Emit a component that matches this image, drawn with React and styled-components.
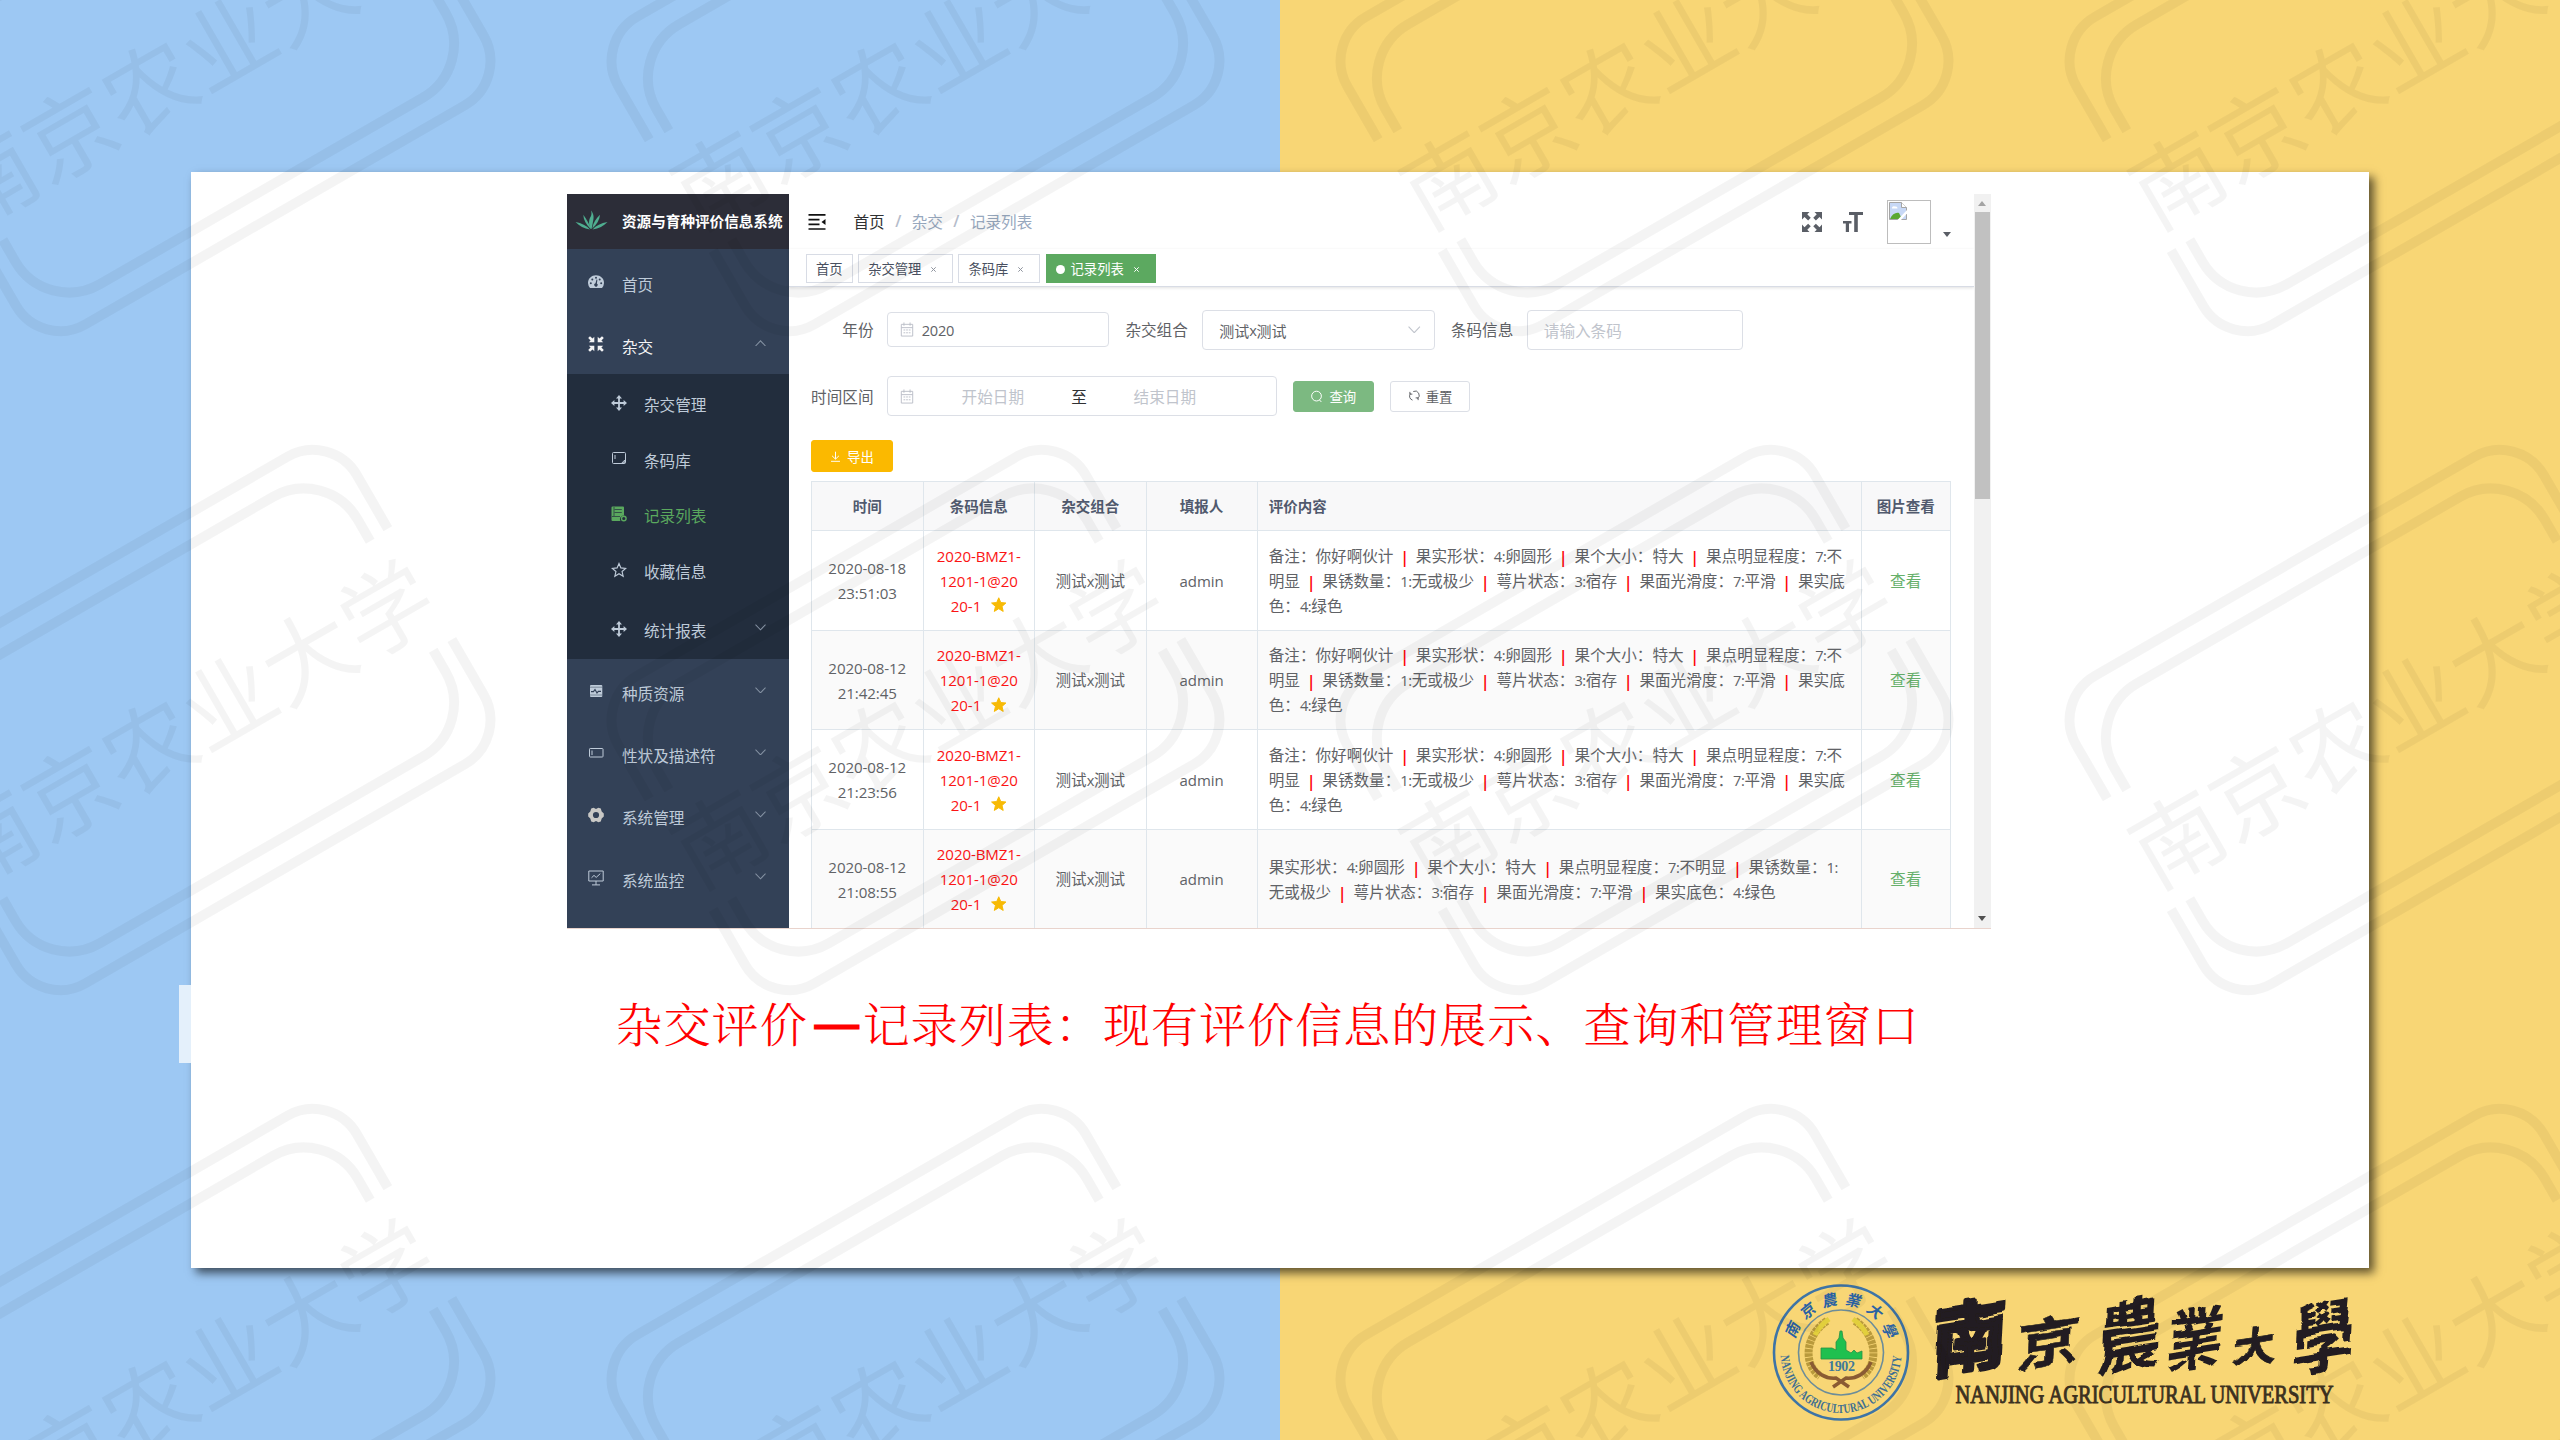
import React from 'react';
import styled, { createGlobalStyle, css } from 'styled-components';

const GlobalStyle = createGlobalStyle`
  *, *::before, *::after { box-sizing: border-box; }
  body {
    margin: 0;
    font-family: "Open Sans", "Noto Sans", "Noto Sans CJK SC", sans-serif;
    color: #606266;
  }
`;

/* ---------- slide ---------- */

const Slide = styled.div`
  position: relative;
  width: 2560px;
  height: 1440px;
  overflow: hidden;
  padding: 172px 191px 0;
  background: linear-gradient(90deg, #9dc8f3 0 50%, #f8d675 50% 100%);
`;

const Card = styled.section`
  position: relative;
  height: 1096px;
  padding: 22px 0 0 376px;
  background: #fff;
  box-shadow: 5px 5px 9px rgba(0, 0, 0, 0.62);
`;

const SideTab = styled.div`
  position: absolute;
  left: -12px;
  top: 813px;
  width: 12px;
  height: 78px;
  background: #e4f0fb;
`;

const Caption = styled.h1`
  display: flex;
  margin: 62px 0 0 48.5px;
  height: 70px;
  line-height: 70px;
  font-family: "Liberation Serif", "Noto Serif CJK SC", "Noto Sans CJK SC", serif;
  font-weight: 300;
  font-size: 47px;
  letter-spacing: 1.05px;
  color: #f00;
  white-space: nowrap;
`;

const Dash = styled.span`
  width: 55px;
  padding-left: 8px;
  font-size: 42px;
  line-height: 64px;
  letter-spacing: 0;
  -webkit-text-stroke: 3px #f00;
`;

/* ---------- application window ---------- */

const Window = styled.div`
  display: flex;
  width: 1424px;
  height: 735px;
  overflow: hidden;
  border-bottom: 1px solid #e9d3cc;
`;

const Sidebar = styled.nav`
  flex: none;
  width: 222px;
  background: #334157;
`;

const Brand = styled.div`
  display: flex;
  align-items: center;
  height: 55.4px;
  padding: 0 0 2px 8px;
  background: #2c2d38;
  color: #fff;
  font-weight: 700;
  font-size: 14.6px;
  white-space: nowrap;
  svg { margin-right: 14px; flex: none; }
`;

const Item = styled.div`
  position: relative;
  display: flex;
  align-items: center;
  height: ${p => (p.$tall ? 62.3 : 55.6)}px;
  padding: 0 23px 0 ${p => (p.$nested ? 44 : 21)}px;
  font-size: 15.6px;
  color: ${p => p.$color || '#bfcbd9'};
`;

const ItemIcon = styled.span`
  display: flex;
  width: 16px;
  height: 16px;
  margin: 2px ${p => (p.$nested ? 17 : 18)}px 0 0;
`;

const ItemText = styled.span`
  flex: 1;
  padding-top: ${p => (p.$nested ? 5.5 : 7)}px;
`;

const Submenu = styled.div`
  background: #222d3d;
`;

const Main = styled.main`
  flex: none;
  width: 1184.5px;
  background: #fff;
`;

const Navbar = styled.header`
  display: flex;
  align-items: center;
  height: 55px;
  padding: 0 23px 0 19px;
  box-shadow: 0 1px 4px rgba(0, 21, 41, 0.08);
`;

const Crumbs = styled.div`
  display: flex;
  flex: 1;
  padding: 0 0 0 27.5px;
  font-size: 15.6px;
  color: #97a8be;
`;

const Crumb = styled.span`
  color: ${p => (p.$link ? '#303133' : '#97a8be')};
`;

const Slash = styled.b`
  width: 27px;
  text-align: center;
  font-weight: 600;
  color: #b5bccb;
`;

const HeadTools = styled.div`
  display: flex;
  align-items: center;
  gap: 21px;
  color: #5a5e66;
`;

const Avatar = styled.div`
  width: 44px;
  height: 44px;
  margin: 0 1px 0 3px;
  padding: 1px;
  border: 1px solid #bdbdbd;
`;

const Caret = styled.i`
  width: 0;
  height: 0;
  margin: 26px 0 0 -10px;
  border: 4px solid transparent;
  border-top: 5px solid #5a5e66;
  border-bottom: 0;
`;

const Tags = styled.div`
  display: flex;
  gap: 5.7px;
  height: 38px;
  padding: 5px 0 0 17px;
  border-bottom: 1px solid #d8dce5;
  box-shadow: 0 1px 3px rgba(0, 0, 0, 0.12);
  background: #fff;
`;

const Tag = styled.span`
  display: flex;
  align-items: center;
  height: 29px;
  width: ${p => p.$w}px;
  padding: 0 0 0 9px;
  border: 1px solid ${p => (p.$active ? '#5ca960' : '#d8dce5')};
  background: ${p => (p.$active ? '#5ca960' : '#fff')};
  color: ${p => (p.$active ? '#fff' : '#495060')};
  font-size: 13.3px;
  white-space: nowrap;
  svg { margin: 2px 0 0 10px; }
`;

const Dot = styled.i`
  width: 9px;
  height: 9px;
  margin: 1px 6px 0 0;
  border-radius: 50%;
  background: #fff;
`;

const Content = styled.div`
  padding: 22.6px 22px 0 22px;
`;

const FormRow = styled.div`
  display: flex;
  align-items: center;
  height: 40px;
  margin-bottom: ${p => p.$gap}px;
`;

const Label = styled.label`
  width: ${p => p.$w}px;
  margin-right: ${p => p.$mr}px;
  text-align: right;
  font-size: 15.6px;
  white-space: nowrap;
`;

const Field = styled.div`
  display: flex;
  align-items: center;
  width: ${p => p.$w}px;
  height: ${p => p.$h || 40}px;
  margin-right: ${p => p.$mr || 0}px;
  padding: 1px 13px 0 ${p => p.$pl}px;
  border: 1px solid #dcdfe6;
  border-radius: 4px;
  background: #fff;
  font-size: 15px;
  color: #606266;
  svg { margin-top: -1px; }
`;

const FieldValue = styled.span`
  margin-left: 7.5px;
  font-size: 14.6px;
  letter-spacing: -0.3px;
`;

const Placeholder = styled.span`
  font-size: 15.6px;
  color: #c0c4cc;
  width: ${p => (p.$w ? `${p.$w}px` : 'auto')};
  text-align: ${p => (p.$w ? 'center' : 'left')};
`;

const RangeWord = styled.span`
  width: 16px;
  font-size: 15.6px;
  color: #303133;
`;

const Spacer = styled.span`
  flex: 1;
`;

const Button = styled.button`
  display: flex;
  align-items: center;
  justify-content: center;
  gap: 6px;
  width: ${p => p.$w}px;
  height: ${p => p.$h || 31}px;
  margin: 0 ${p => p.$mr || 0}px 0 0;
  padding: 0 0 1px;
  border: 1px solid ${p => p.$border};
  border-radius: 3px;
  background: ${p => p.$bg};
  color: ${p => p.$fg};
  font: 13.4px "Open Sans", "Noto Sans CJK SC", sans-serif;
  svg { margin-top: 1px; }
`;

/* ---------- table ---------- */

const columns = '111.5px 111.5px 111.5px 111.2px 604px 89px';

const Grid = styled.div`
  width: 1139.7px;
  margin: 9px 0 0;
  border: 1px solid #dfe6ec;
  border-right: 0;
  border-bottom: 0;
`;

const Row = styled.div`
  display: grid;
  grid-template-columns: ${columns};
  height: ${p => (p.$head ? 49 : 99.5)}px;
  background: ${p => (p.$head ? '#f8f8f9' : p.$striped ? '#fafafa' : '#fff')};
`;

const cellBox = css`
  display: flex;
  flex-direction: column;
  justify-content: center;
  align-items: ${p => (p.$left ? 'flex-start' : 'center')};
  padding-left: ${p => (p.$left ? 11 : 0)}px;
  border-right: 1px solid #dfe6ec;
  border-bottom: 1px solid #dfe6ec;
`;

const HeadCell = styled.div`
  ${cellBox}
  padding-bottom: 1px;
  font-weight: 700;
  font-size: 14.5px;
  color: #515a6e;
`;

const Cell = styled.div`
  ${cellBox}
  padding-top: 1.8px;
  font-size: 15px;
  line-height: 25.1px;
  color: ${p => p.$color || '#606266'};
  white-space: nowrap;
`;

const Line = styled.div`
  display: flex;
  align-items: center;
  height: 25.1px;
  font-size: ${p => (p.$cjk ? 15.6 : 15.1)}px;
  letter-spacing: ${p => (p.$cjk ? 0 : -0.1)}px;
  svg { margin: -3px 0 0 10px; }
`;

const Latin = styled.span`
  font-size: 14.6px;
  letter-spacing: -0.4px;
`;

const Bar = styled.span`
  width: 22.4px;
  text-align: center;
  font-size: 17px;
  font-weight: 600;
  color: #f00;
`;

/* ---------- scrollbar ---------- */

const Scroll = styled.div`
  display: flex;
  flex-direction: column;
  align-items: center;
  flex: 1;
  background: #f1f1f1;
`;

const ScrollArrow = styled.i`
  margin: ${p => (p.$down ? '417px 0 0' : '7px 0 6px')};
  border: 4px solid transparent;
  ${p => (p.$down
    ? 'border-top: 5px solid #505050; border-bottom: 0;'
    : 'border-bottom: 5px solid #a3a3a3; border-top: 0;')}
`;

const Thumb = styled.div`
  width: 15.5px;
  height: 287px;
  background: #c1c1c1;
`;

/* ---------- university mark ---------- */

const Mark = styled.div`
  display: flex;
  margin: 15px 0 0 1580px;
  svg { overflow: visible; }
`;

const Overlay = styled.svg`
  position: absolute;
  inset: 0;
  pointer-events: none;
`;

/* ---------- icons ---------- */

const Svg = ({ s = 16, w, h, box = '0 0 16 16', children, ...rest }) => (
  <svg width={w || s} height={h || s} viewBox={box} fill="none" stroke="currentColor" strokeWidth="1" preserveAspectRatio="none" {...rest}>
    {children}
  </svg>
);

const Leaf = () => (
  <svg width="33" height="21" viewBox="0 0 33 21" fill="#4fae90">
    <path d="M15.800 19C13 14 14 9 16 6C16.800 4 16.500 2 16 .5C19 4 19 8 18 11.500C17.500 14.500 17 17 16.500 19Z" />
    <path d="M15.200 18.500C11 14.500 8.500 10 8.300 4.800C11 8.500 13.800 13 15.800 18.500Z" />
    <path d="M17.300 18.500C18 13 21 8.500 25 4.800C24.500 10 22 14.500 17.300 18.500Z" />
    <path d="M15 19.500C9 18.500 4.500 16 .5 12C6.500 13 11.500 15.500 15 19.500Z" />
    <path d="M17.500 19.500C21 15.500 26 13 32.500 12C28.500 16 24 18.500 17.500 19.500Z" />
  </svg>
);

const Gauge = () => (
  <Svg stroke="none">
    <path fill="currentColor" d="M2 14A8 8 0 0 1 0 9C0 4.500 3.600 1.300 8 1.300S16 4.500 16 9A8 8 0 0 1 14 14Z" />
    <g fill="#334157">
      <circle cx="8" cy="3.800" r="1" /><circle cx="4.300" cy="5.400" r="1" /><circle cx="11.700" cy="5.400" r="1" />
      <circle cx="2.800" cy="9.300" r="1" /><circle cx="13.200" cy="9.300" r="1" />
      <path d="M8.500 5.500L9.400 5.700L8.900 9.500A1.700 1.700 0 1 1 7.500 9.300Z" />
    </g>
  </Svg>
);

const arrowOut = 'M0 0H6L4.200 1.800L7 4.600L4.900 6.700L2 3.900L0 6Z';
const arrowIn = 'M6.300 6.300H.8L2.600 4.500L.2 2L2 .2L4.500 2.600L6.300 .8Z';

const FourCorners = ({ d, s }) => (
  <Svg s={s} stroke="none" fill="currentColor">
    <path d={d} />
    <path d={d} transform="matrix(-1 0 0 1 16 0)" />
    <path d={d} transform="matrix(1 0 0 -1 0 16)" />
    <path d={d} transform="matrix(-1 0 0 -1 16 16)" />
  </Svg>
);

const Move = () => (
  <Svg stroke="none" fill="currentColor">
    <path d="M8 0L11 3.400H8.900V7.100H12.600V5L16 8L12.600 11V8.900H8.900V12.600H11L8 16L5 12.600H7.100V8.900H3.400V11L0 8L3.400 5V7.100H7.100V3.400H5Z" />
  </Svg>
);

const CodeBox = () => (
  <Svg>
    <rect x="1.500" y="2.500" width="13" height="11" rx="1" />
    <path d="M4 5V9M11 12.800L13.800 10V12.800Z" />
  </Svg>
);

const Records = () => (
  <Svg stroke="none" fill="currentColor">
    <path d="M1.500 .5H12Q13 .5 13 1.500V9.500A3.600 3.600 0 0 0 9.500 15H1.500Q.5 15 .5 14V1.500Q.5 .5 1.500 .5Z" />
    <path d="M3.500 3.500H10.800M3.500 6.500H10.800M1 10.500H9M3 1V10" stroke="#222d3d" strokeWidth=".7" />
    <circle cx="12.800" cy="12.500" r="2.300" fill="none" stroke="currentColor" strokeWidth="1.400" />
  </Svg>
);

const starPath = 'M8 .8L10.100 5.700L15.400 6.200L11.400 9.700L12.600 14.900L8 12.100L3.400 14.900L4.600 9.700L.6 6.200L5.900 5.700Z';
const StarLine = () => (<Svg><path d={starPath} transform="translate(.8 .8) scale(.9)" strokeWidth="1.300" /></Svg>);
const StarFull = () => (<Svg s={15.500} stroke="none" fill="#f7ba05"><path d={starPath} stroke="#f7ba05" strokeLinejoin="round" /></Svg>);

const Pulse = () => (
  <Svg stroke="none">
    <rect x="2" y="2" width="12.300" height="12" rx="1" fill="currentColor" />
    <path d="M2 4.200H14.300M2 12H14.300" stroke="#334157" strokeWidth=".5" />
    <path d="M3 8.600H5.500L7 6.500L9 10L10.300 8.300H13" stroke="#334157" strokeWidth="1.200" />
  </Svg>
);

const Battery = () => (
  <Svg><rect x="1.500" y="3.500" width="13.500" height="8.500" rx=".7" /><path d="M4 5.500V10" /></Svg>
);

const Gear = () => (
  <Svg stroke="none">
    <path fill="#c9c8c5" fillRule="evenodd" d="M3.200 1.400L5.600 .8L8 2L10.400 .8L12.800 1.400L13.700 4.600L15.800 6.500V9.500L13.700 11.400L12.800 14.600L10.400 15.200L8 14L5.600 15.200L3.200 14.600L2.300 11.400L.2 9.500V6.500L2.300 4.600ZM8 4.900A3.100 3.100 0 1 0 8 11.100A3.100 3.100 0 1 0 8 4.900Z" />
  </Svg>
);

const Monitor = () => (
  <Svg><path d="M.8 1H15.200V11H.8ZM8 11V14.800M4 14.900H12M3.500 7.800L6 5.400L8.200 7.400L12.300 3.600" /></Svg>
);

const Chevron = ({ up, color = '#8592a3', s = 11 }) => (
  <Svg w={s} h={s * 0.6} box="0 0 11 6" stroke={color}>
    <path d={up ? 'M.5 5.500L5.500 .7L10.500 5.500' : 'M.5 .5L5.500 5.300L10.500 .5'} />
  </Svg>
);

const Calendar = () => (
  <Svg w={14} h={15} stroke="#b8bcc6">
    <path d="M1.500 2.500H14.500V15H1.500ZM1.500 6H14.500M4.500 .5V4M11.500 .5V4M4 8.500H6M7 8.500H9M10 8.500H12M4 11.500H6M7 11.500H9M10 11.500H12" />
  </Svg>
);

const Hamburger = () => (
  <Svg w={18} h={16} box="0 0 18 16" stroke="#111" strokeWidth="1.700">
    <path d="M.5 .9H17.500M.5 5.600H11.500M.5 10.300H11.500M.5 15H17.500" />
    <path d="M17.500 5V11L13.500 8Z" fill="#111" stroke="none" />
  </Svg>
);

const SizeT = () => (
  <Svg s={20} box="0 0 20 20" stroke="none" fill="#5a5e66">
    <path d="M6 0H20V3H14.800V20H11.200V3H6ZM0 9H8.500V11.500H6V20H2.800V11.500H0Z" />
  </Svg>
);

const BrokenImage = () => (
  <svg width="18" height="18" viewBox="0 0 18 18">
    <path d="M.5 .5H12.500L17.500 5.500V17.500H.5Z" fill="#c7d8f6" stroke="#a5a5a5" />
    <path d="M3 6.500A2 2 0 0 1 6 4.500A2 2 0 0 1 8.500 6.500Z" fill="#fff" />
    <path d="M1 17C3 12 7 10 10 11L13 17Z" fill="#5aa832" />
    <path d="M8.500 18L18 8V11.500L12 18Z" fill="#fff" />
    <path d="M12.500 .5V5.500H17.500" fill="#fff" stroke="#a5a5a5" />
  </svg>
);

const Cross = ({ color = '#8f949e' }) => (
  <Svg s={5} box="0 0 5 5" stroke={color}><path d="M.3 .3L4.700 4.700M4.700 .3L.3 4.700" /></Svg>
);

const SearchIcon = () => (
  <Svg s={13} strokeWidth="1.200"><circle cx="8" cy="7.500" r="6" /><path d="M11.500 12L14 14.800" /></Svg>
);

const Refresh = () => (
  <Svg s={12} strokeWidth="1.300">
    <path d="M6 13.500A5.500 5.500 0 0 1 3.500 4.500M2.500 2.500V5.500H5.800M7 2A5.500 5.500 0 0 1 12.500 11.500M13.500 13.500V10.500H10.200" />
  </Svg>
);

const Download = () => (
  <Svg s={11} strokeWidth="1.400"><path d="M8 1V11.500M3 7L8 11.800L13 7M1.500 15H14.500" /></Svg>
);

/* ---------- data ---------- */

const tail = [['明显', '果锈数量：1:无或极少', '萼片状态：3:宿存', '果面光滑度：7:平滑', '果实底'], ['色：4:绿色']];
const full = [['备注：你好啊伙计', '果实形状：4:卵圆形', '果个大小：特大', '果点明显程度：7:不'], ...tail];
const records = [
  { day: '2020-08-18', time: '23:51:03', lines: full },
  { day: '2020-08-12', time: '21:42:45', lines: full },
  { day: '2020-08-12', time: '21:23:56', lines: full },
  {
    day: '2020-08-12',
    time: '21:08:55',
    lines: [
      ['果实形状：4:卵圆形', '果个大小：特大', '果点明显程度：7:不明显', '果锈数量：1:'],
      ['无或极少', '萼片状态：3:宿存', '果面光滑度：7:平滑', '果实底色：4:绿色'],
    ],
  },
];

const Mixed = ({ children }) =>
  children.split(/([0-9:x]+)/).filter(Boolean).map((t, i) => (/^[0-9:x]+$/.test(t) ? <Latin key={i}>{t}</Latin> : <span key={i}>{t}</span>));

const MenuItem = ({ icon, text, nested, tall, color, arrow }) => (
  <Item $nested={nested} $tall={tall} $color={color}>
    <ItemIcon $nested={nested}>{icon}</ItemIcon>
    <ItemText $nested={nested}>{text}</ItemText>
    {arrow && <Chevron up={arrow === 'up'} />}
  </Item>
);

const RecordRow = ({ r, striped }) => (
  <Row $striped={striped}>
    <Cell><Line>{r.day}</Line><Line>{r.time}</Line></Cell>
    <Cell $color="#fb1414">
      <Line>2020-BMZ1-</Line>
      <Line>1201-1@20</Line>
      <Line>20-1<StarFull /></Line>
    </Cell>
    <Cell><Line $cjk><Mixed>测试x测试</Mixed></Line></Cell>
    <Cell>admin</Cell>
    <Cell $left>
      {r.lines.map((parts, i) => (
        <Line key={i} $cjk>
          {parts.map((t, j) => (
            <React.Fragment key={j}>
              {j > 0 && <Bar>|</Bar>}
              <Mixed>{t}</Mixed>
            </React.Fragment>
          ))}
        </Line>
      ))}
    </Cell>
    <Cell $color="#67b06b"><Line $cjk>查看</Line></Cell>
  </Row>
);

const Tile = ({ x, y }) => (
  <g transform={`translate(${x} ${y}) rotate(-30)`}>
    <g fill="none" stroke="#000" strokeWidth="10">
      <path d="M-270 -65V-126.500A51 51 0 0 1 -219 -177.500H219A51 51 0 0 1 270 -126.500V-65" />
      <path d="M-270 63V126.500A51 51 0 0 0 -219 177.500H219A51 51 0 0 0 270 126.500V63" />
      <path d="M-248.500 -63V-88A62 62 0 0 1 -186.500 -150H186.500A62 62 0 0 1 248.500 -88V-63" />
      <path d="M-248.500 63V88A62 62 0 0 0 -186.500 150H186.500A62 62 0 0 0 248.500 88V63" />
    </g>
    <text x="0" y="39" textAnchor="middle" fontSize="91.500" fontFamily='"Noto Sans CJK SC", sans-serif'>南京农业大学</text>
  </g>
);

const Watermark = () => (
  <Overlay width="2560" height="1440" opacity="0.041">
    {[-1, 0, 1].map(j => [-1, 0, 1, 2].map(i => <Tile key={`${i}${j}`} x={915.5 + 729 * i} y={720 + 659 * j} />))}
  </Overlay>
);

/* glyph, centre x, centre y, width, height, stroke width */
const brush = [
  ['南', 1970, 1337, 70, 76, 5], ['京', 2049, 1343, 58, 54, 1], ['農', 2129, 1336, 62, 76, 0],
  ['業', 2195, 1339, 54, 66, 0], ['大', 2255, 1346, 40, 36, 2], ['學', 2323, 1337, 60, 78, 0],
];
const sealTop = [['南', -65], ['京', -39], ['農', -13], ['業', 13], ['大', 39], ['學', 65]];

const University = () => (
  <Mark>
    <svg width="600" height="140" viewBox="1771 1283 600 140">
      <defs>
        <path id="seal-arc" d="M1780.500 1352.500A60.500 60.500 0 0 0 1901.500 1352.500" />
        <filter id="ink" x="-5%" y="-5%" width="110%" height="110%">
          <feTurbulence type="fractalNoise" baseFrequency="0.035" numOctaves="1" seed="4" result="n" />
          <feDisplacementMap in="SourceGraphic" in2="n" scale="12" xChannelSelector="R" yChannelSelector="G" />
        </filter>
      </defs>
      <g fill="none" stroke="#3e74a6">
        <circle cx="1841" cy="1352.500" r="67" strokeWidth="2.600" />
        <circle cx="1841" cy="1352.500" r="42.500" strokeWidth="1.600" opacity=".75" />
      </g>
      <g fill="#2a62a4" fontFamily='"Noto Sans CJK TC", sans-serif' fontWeight="700" fontSize="15" textAnchor="middle">
        {sealTop.map(([c, a]) => (
          <text key={c} transform={`translate(1841 1352.500) rotate(${a}) translate(0 -48) skewX(-10)`}>{c}</text>
        ))}
      </g>
      <text fill="#3e6f93" fontFamily='"Liberation Serif", serif' fontWeight="700" fontSize="13">
        <textPath href="#seal-arc" startOffset="3" textLength="183" lengthAdjust="spacingAndGlyphs">NANJING AGRICULTURAL UNIVERSITY</textPath>
      </text>
      <g fill="none" strokeWidth="8">
        <path d="M1827 1321C1806 1334 1802 1364 1820 1376" stroke="#b99a3c" strokeDasharray="3.500 .8" />
        <path d="M1855 1321C1876 1334 1880 1364 1862 1376" stroke="#b99a3c" strokeDasharray="3.500 .8" />
        <path d="M1829 1319C1822 1324 1818 1329 1815 1335" stroke="#e2cf3c" strokeWidth="5" />
        <path d="M1853 1319C1860 1324 1864 1329 1867 1335" stroke="#e2cf3c" strokeWidth="5" />
        <path d="M1811 1362C1816 1374 1826 1379 1836 1378L1849 1387M1871 1362C1866 1374 1856 1379 1846 1378L1833 1387" stroke="#8a5b33" strokeWidth="3.500" />
      </g>
      <path d="M1840 1331H1842L1843 1338L1846 1342V1350L1851 1353L1854 1350L1857 1353L1862 1351V1359H1821V1348H1832L1836 1350V1342L1839 1338Z" fill="#1fc04f" stroke="#2b8f45" strokeWidth=".8" />
      <text x="1841.500" y="1371" textAnchor="middle" fontFamily='"Liberation Serif", serif' fontWeight="700" fontSize="14" textLength="27" fill="#3f7a9a">1902</text>
      <g filter="url(#ink)" fill="#231f20" stroke="#231f20" strokeLinejoin="round" strokeLinecap="round" fontFamily='"Noto Sans CJK TC", sans-serif' fontWeight="700" fontSize="100" textAnchor="middle">
        {brush.map(([c, x, y, w, h, sw]) => (
          <text key={c} strokeWidth={sw} transform={`translate(${x} ${y}) skewX(-12) rotate(-9) scale(${w / 96} ${h / 96}) translate(0 37)`}>{c}</text>
        ))}
      </g>
      <text x="1955.500" y="1402.500" fontFamily='"Liberation Serif", serif' fontSize="25" textLength="378" lengthAdjust="spacingAndGlyphs" fill="#3c3120" stroke="#3c3120" strokeWidth=".9">NANJING AGRICULTURAL UNIVERSITY</text>
    </svg>
  </Mark>
);

export default function App() {
  return (
    <Slide>
      <GlobalStyle />
      <Card>
        <SideTab />
        <Window>
          <Sidebar>
            <Brand><Leaf />资源与育种评价信息系统</Brand>
            <MenuItem tall icon={<Gauge />} text="首页" />
            <MenuItem tall icon={<FourCorners d={arrowIn} />} text="杂交" color="#f4f4f5" arrow="up" />
            <Submenu>
              <MenuItem nested icon={<Move />} text="杂交管理" />
              <MenuItem nested icon={<CodeBox />} text="条码库" />
              <MenuItem nested icon={<Records />} text="记录列表" color="#5aa85e" />
              <MenuItem nested icon={<StarLine />} text="收藏信息" />
              <MenuItem nested tall icon={<Move />} text="统计报表" arrow="down" />
            </Submenu>
            <MenuItem tall icon={<Pulse />} text="种质资源" arrow="down" />
            <MenuItem tall icon={<Battery />} text="性状及描述符" arrow="down" />
            <MenuItem tall icon={<Gear />} text="系统管理" arrow="down" />
            <MenuItem tall icon={<Monitor />} text="系统监控" arrow="down" />
          </Sidebar>

          <Main>
            <Navbar>
              <Hamburger />
              <Crumbs>
                <Crumb $link>首页</Crumb><Slash>/</Slash><Crumb>杂交</Crumb><Slash>/</Slash><Crumb>记录列表</Crumb>
              </Crumbs>
              <HeadTools>
                <FourCorners d={arrowOut} s={20} />
                <SizeT />
                <Avatar><BrokenImage /></Avatar>
                <Caret />
              </HeadTools>
            </Navbar>
            <Tags>
              <Tag $w={46.500}>首页</Tag>
              <Tag $w={94.500}>杂交管理<Cross /></Tag>
              <Tag $w={81.500}>条码库<Cross /></Tag>
              <Tag $w={110} $active><Dot />记录列表<Cross color="#fff" /></Tag>
            </Tags>

            <Content>
              <FormRow $gap={26.600}>
                <Label $w={62.500} $mr={13.800}>年份</Label>
                <Field $w={222} $h={35.500} $pl={12} $mr={16}><Calendar /><FieldValue>2020</FieldValue></Field>
                <Label $w={62.500} $mr={14.500}>杂交组合</Label>
                <Field $w={232.500} $pl={16} $mr={16}><Mixed>测试x测试</Mixed><Spacer /><Chevron color="#c0c4cc" s={12.500} /></Field>
                <Label $w={62.500} $mr={13.500}>条码信息</Label>
                <Field $w={216} $pl={16}><Placeholder>请输入条码</Placeholder></Field>
              </FormRow>
              <FormRow $gap={24}>
                <Label $w={62.500} $mr={13.800}>时间区间</Label>
                <Field $w={389.500} $pl={12} $mr={16}>
                  <Calendar />
                  <Placeholder $w={157}>开始日期</Placeholder>
                  <RangeWord>至</RangeWord>
                  <Placeholder $w={155}>结束日期</Placeholder>
                </Field>
                <Button $w={81} $bg="#7cb981" $border="#7cb981" $fg="#fff" $mr={16}><SearchIcon />查询</Button>
                <Button $w={80.500} $bg="#fff" $border="#dcdfe6" $fg="#606266"><Refresh />重置</Button>
              </FormRow>
              <Button $w={82} $h={32} $bg="#fbb900" $border="#fbb900" $fg="#fff"><Download />导出</Button>

              <Grid>
                <Row $head>
                  <HeadCell>时间</HeadCell>
                  <HeadCell>条码信息</HeadCell>
                  <HeadCell>杂交组合</HeadCell>
                  <HeadCell>填报人</HeadCell>
                  <HeadCell $left>评价内容</HeadCell>
                  <HeadCell>图片查看</HeadCell>
                </Row>
                {records.map((r, i) => <RecordRow key={i} r={r} striped={i % 2 === 1} />)}
              </Grid>
            </Content>
          </Main>

          <Scroll>
            <ScrollArrow />
            <Thumb />
            <ScrollArrow $down />
          </Scroll>
        </Window>

        <Caption>杂交评价<Dash>—</Dash>记录列表：现有评价信息的展示、查询和管理窗口</Caption>
      </Card>
      <University />
      <Watermark />
    </Slide>
  );
}
